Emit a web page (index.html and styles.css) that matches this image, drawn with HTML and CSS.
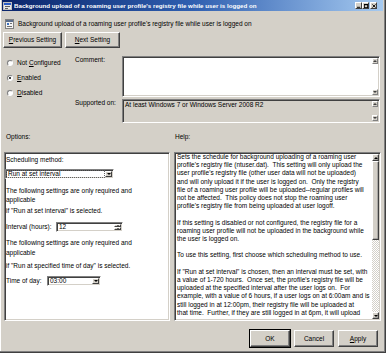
FILE: index.html
```html
<!DOCTYPE html>
<html>
<head>
<meta charset="utf-8">
<title>Background upload of a roaming user profile's registry file while user is logged on</title>
<link rel="stylesheet" href="styles.css">
</head>
<body>
<div class="window">
  <div class="titlebar">
    <svg class="ticon" width="9" height="8" viewBox="0 0 9 8">
      <rect x="0.5" y="0.5" width="8" height="7" fill="#e8e8e8" stroke="#c0c0c0"/>
      <rect x="1" y="1" width="7" height="2" fill="#2a5cc8"/>
      <rect x="2" y="4" width="5" height="1" fill="#606060"/>
      <rect x="2" y="6" width="3" height="1" fill="#606060"/>
    </svg>
    <span class="title">Background upload of a roaming user profile's registry file while user is logged on</span>
    <div class="tbtns">
      <span class="tbtn"><svg width="5" height="5" viewBox="0 0 5 5"><rect x="0" y="3.5" width="4" height="1.2" fill="#000"/></svg></span>
      <span class="tbtn"><svg width="5" height="5" viewBox="0 0 5 5"><rect x="0.5" y="0.5" width="4" height="4" fill="none" stroke="#000"/><rect x="0" y="0" width="5" height="1.5" fill="#000"/></svg></span>
      <span class="tbtn close"><svg width="5" height="5" viewBox="0 0 5 5"><path d="M0.5 0.5 L4.5 4.5 M4.5 0.5 L0.5 4.5" stroke="#000" stroke-width="1.1"/></svg></span>
    </div>
  </div>

  <div class="content">
    <div class="header">
      <svg class="hicon" width="9" height="10" viewBox="0 0 9 10">
        <rect x="0.5" y="0.5" width="8" height="9" fill="#f4f4f4" stroke="#808080"/>
        <rect x="1" y="1" width="7" height="2" fill="#5a6e8c"/>
        <rect x="2" y="4" width="2" height="2" fill="#3a70c0"/>
        <rect x="5" y="4" width="2" height="1" fill="#707070"/>
        <rect x="2" y="7" width="5" height="1" fill="#707070"/>
      </svg>
      <span>Background upload of a roaming user profile's registry file while user is logged on</span>
    </div>

    <div class="nav">
      <button class="btn prev"><u>P</u>revious Setting</button>
      <button class="btn next"><u>N</u>ext Setting</button>
    </div>

    <div class="top">
      <div class="radios">
        <div class="radio"><span class="rc"></span><span>Not <u>C</u>onfigured</span></div>
        <div class="radio"><span class="rc on"></span><span><u>E</u>nabled</span></div>
        <div class="radio"><span class="rc"></span><span><u>D</u>isabled</span></div>
      </div>
      <div class="fields">
        <div class="flabel">Comment:</div>
        <div class="box comment sunken">
          <div class="boxtext"></div>
          <div class="mini-scroll">
            <span class="mbtn"><span class="arr up"></span></span>
            <span class="mtrack"></span>
            <span class="mbtn"><span class="arr down"></span></span>
          </div>
        </div>
        <div class="flabel">Supported on:</div>
        <div class="box supported sunken">
          <div class="boxtext">At least Windows 7 or Windows Server 2008 R2</div>
          <div class="mini-scroll">
            <span class="mbtn"><span class="arr up"></span></span>
            <span class="mtrack"></span>
            <span class="mbtn"><span class="arr down"></span></span>
          </div>
        </div>
      </div>
    </div>

    <div class="labels">
      <span class="lab-options">Options:</span>
      <span class="lab-help">Help:</span>
    </div>

    <div class="panes">
      <div class="options sunken">
        <p class="l8 first">Scheduling method:</p>
        <div class="combo sunken wide">
          <span class="cval sel">Run at set interval</span>
          <span class="cbtn"><span class="arr down"></span></span>
        </div>
        <p class="l9 m7">The following settings are only required and<br>applicable</p>
        <p class="l9 m2">if "Run at set interval" is selected.</p>
        <div class="row m7">
          <span class="lbl w51">Interval (hours):</span>
          <div class="spin sunken">
            <span class="cval">12</span>
            <span class="sbtns"><span class="sb"><span class="arr up"></span></span><span class="sb"><span class="arr down"></span></span></span>
          </div>
        </div>
        <p class="l95 m6">The following settings are only required and<br>applicable</p>
        <p class="l95 m4">if "Run at specified time of day" is selected.</p>
        <div class="row m55">
          <span class="lbl w42">Time of day:</span>
          <div class="combo sunken small">
            <span class="cval">03:00</span>
            <span class="cbtn"><span class="arr down"></span></span>
          </div>
        </div>
      </div>

      <div class="help sunken">
        <div class="helptext">Sets the schedule for background uploading of a roaming user
profile's registry file (ntuser.dat).  This setting will only upload the
user profile's registry file (other user data will not be uploaded)
and will only upload it if the user is logged on.  Only the registry
file of a roaming user profile will be uploaded--regular profiles will
not be affected.  This policy does not stop the roaming user
profile's registry file from being uploaded at user logoff.

If this setting is disabled or not configured, the registry file for a
roaming user profile will not be uploaded in the background while
the user is logged on.

To use this setting, first choose which scheduling method to use.

If "Run at set interval" is chosen, then an interval must be set, with
a value of 1-720 hours.  Once set, the profile's registry file will be
uploaded at the specified interval after the user logs on.  For
example, with a value of 6 hours, if a user logs on at 6:00am and is
still logged in at 12:00pm, their registry file will be uploaded at
that time.  Further, if they are still logged in at 6pm, it will upload</div>
        <div class="vscroll">
          <span class="sbtn"><span class="arr up dark"></span></span>
          <span class="thumb"></span>
          <span class="track"></span>
          <span class="sbtn"><span class="arr down dark"></span></span>
        </div>
      </div>
    </div>

    <div class="footer">
      <button class="btn fbtn default">OK</button>
      <button class="btn fbtn">Cancel</button>
      <button class="btn fbtn"><u>A</u>pply</button>
    </div>
  </div>
</div>
</body>
</html>
```

FILE: styles.css
```css
* { box-sizing: border-box; }
html, body { margin: 0; padding: 0; background: #d4d0c8; }
body {
  font-family: "Liberation Sans", Arial, sans-serif;
  font-size: 6.5px;
  line-height: 8px;
  color: #000;
}
p { margin: 0; }
u { text-decoration: underline; text-underline-offset: 1px; }

.window {
  width: 386px;
  height: 353px;
  display: flex;
  flex-direction: column;
  padding: 0 2px 0 2px;
  border-right: 1px solid #404040;
  border-bottom: 1px solid #404040;
  box-shadow: inset -1px -1px #808080, inset 1px 0 #ffffff;
  overflow: hidden;
}

/* title bar */
.titlebar {
  height: 11px;
  flex: none;
  display: flex;
  align-items: center;
  padding: 0 6px 0 1px;
  background: linear-gradient(to right, #0a246a 0%, #2f5fb0 50%, #a6caf0 100%);
}
.ticon { flex: none; margin-right: 2px; }
.title {
  flex: 1;
  color: #fff;
  font-weight: bold;
  font-size: 6.2px;
  white-space: nowrap;
  overflow: hidden;
}
.tbtns { display: flex; flex: none; }
.tbtn {
  width: 7px;
  height: 7px;
  display: flex;
  align-items: center;
  justify-content: center;
  background: #d4d0c8;
  border: 1px solid;
  border-color: #fff #404040 #404040 #fff;
}
.tbtn svg { width: 4px; height: 4px; }
.tbtn.close { margin-left: 1px; }

.content { display: flex; flex-direction: column; flex: 1; }

/* header */
.header {
  margin-top: 7px;
  height: 11px;
  display: flex;
  align-items: center;
  gap: 4px;
  padding-left: 3px;
  white-space: nowrap;
}
.hicon { flex: none; }

/* generic raised button */
.btn {
  font: inherit;
  color: #000;
  margin: 0;
  padding: 0;
  background: #d4d0c8;
  border: 1px solid;
  border-color: #fff #404040 #404040 #fff;
  box-shadow: inset -1px -1px #808080;
  display: flex;
  align-items: center;
  justify-content: center;
  white-space: nowrap;
}

.nav { margin-top: 3px; display: flex; gap: 3px; padding-left: 1px; }
.nav .btn { height: 16px; }
.prev { width: 59px; }
.next { width: 55px; }

/* sunken */
.sunken {
  border: 1px solid;
  border-color: #808080 #fff #fff #808080;
  box-shadow: inset 1px 1px #404040, inset -1px -1px #d4d0c8;
}

/* top section */
.top { margin-top: 8px; display: flex; }
.radios {
  width: 73px;
  flex: none;
  padding: 3px 0 0 5px;
  display: flex;
  flex-direction: column;
  gap: 7px;
}
.radio { height: 8px; display: flex; align-items: center; gap: 4px; white-space: nowrap; }
.rc {
  width: 6px;
  height: 6px;
  flex: none;
  border-radius: 50%;
  background: #fff;
  border: 1px solid;
  border-color: #808080 #fff #fff #808080;
  box-shadow: 0 0 0 0.3px #c0c0c0;
  display: flex;
  align-items: center;
  justify-content: center;
}
.rc.on::after {
  content: "";
  width: 2px;
  height: 2px;
  border-radius: 50%;
  background: #000;
}

.fields {
  display: grid;
  grid-template-columns: 47px 258px;
  row-gap: 2px;
}
.flabel { white-space: nowrap; }
.box { display: flex; }
.comment { height: 41px; background: #fff; }
.supported { height: 24px; background: #d4d0c8; }
.boxtext { flex: 1; padding: 1px 2px 0 2px; white-space: nowrap; }

.mini-scroll {
  width: 7px;
  flex: none;
  display: flex;
  flex-direction: column;
  padding: 1px 1px 1px 0;
}
.mbtn {
  height: 6px;
  flex: none;
  background: #d4d0c8;
  border: 1px solid;
  border-color: #fff #808080 #808080 #fff;
  display: flex;
  align-items: center;
  justify-content: center;
}
.mtrack { flex: 1; }
.supported .mtrack { background: #d4d0c8; }

/* arrows */
.arr { width: 0; height: 0; display: block; }
.arr.up { border-left: 2px solid transparent; border-right: 2px solid transparent; border-bottom: 2px solid #404040; }
.arr.down { border-left: 2px solid transparent; border-right: 2px solid transparent; border-top: 2px solid #404040; }
.arr.dark.up { border-bottom-color: #000; }
.arr.dark.down { border-top-color: #000; }

/* labels row */
.labels { margin-top: 10px; height: 8px; display: flex; }
.lab-options { width: 173px; padding-left: 4px; }

/* panes */
.panes { margin-top: 11px; height: 169px; display: flex; gap: 4px; padding-left: 2px; }
.options {
  width: 166px;
  background: #fff;
  padding: 3px 0 0 0;
  display: flex;
  flex-direction: column;
  align-items: flex-start;
  overflow: hidden;
}
.options p { margin-left: 1px; white-space: nowrap; }
.l8 { line-height: 8px; }
.l9 { line-height: 9px; }
.l95 { line-height: 9.5px; }
.m2 { margin-top: 2px; }
.m4 { margin-top: 4px; }
.m6 { margin-top: 6px; }
.m7 { margin-top: 7px; }
.m55 { margin-top: 5.5px; }

.combo, .spin {
  height: 10px;
  display: flex;
  align-items: stretch;
  background: #fff;
  flex: none;
}
.combo.wide { margin-top: 5px; width: 109px; }
.combo.small { width: 54px; }
.spin { width: 67px; }
.cval { flex: 1; padding: 0 2px; display: flex; align-items: center; white-space: nowrap; }
.cval.sel { margin: 1px; padding: 0 1px; outline: 0.5px dotted #606060; outline-offset: -0.5px; }
.cbtn {
  width: 7px;
  margin: 1px 1px 1px 0;
  background: #d4d0c8;
  border: 1px solid;
  border-color: #fff #404040 #404040 #fff;
  display: flex;
  align-items: center;
  justify-content: center;
}
.cbtn .arr.down { border-top-color: #000; }
.sbtns { width: 7px; margin: 1px 1px 1px 0; display: flex; flex-direction: column; }
.sb {
  flex: 1;
  background: #d4d0c8;
  border: 0.5px solid;
  border-color: #fff #404040 #404040 #fff;
  display: flex;
  align-items: center;
  justify-content: center;
}
.sb .arr.up { border-left-width: 1.5px; border-right-width: 1.5px; border-bottom: 1.5px solid #000; }
.sb .arr.down { border-left-width: 1.5px; border-right-width: 1.5px; border-top: 1.5px solid #000; }

.row { display: flex; align-items: center; height: 10px; }
.lbl { white-space: nowrap; padding-left: 1px; flex: none; }
.w51 { width: 51px; }
.w42 { width: 42px; }

.help {
  width: 207px;
  background: #fff;
  display: flex;
  overflow: hidden;
}
.helptext {
  flex: 1;
  margin-top: 0;
  padding-left: 2px;
  white-space: pre;
  line-height: 8.2px;
  overflow: hidden;
}
.vscroll {
  width: 7px;
  flex: none;
  display: flex;
  flex-direction: column;
  margin: 1px 1px 1px 0;
}
.sbtn, .thumb {
  background: #d4d0c8;
  border: 1px solid;
  border-color: #fff #404040 #404040 #fff;
  box-shadow: inset -0.5px -0.5px #808080;
}
.sbtn { height: 7px; flex: none; display: flex; align-items: center; justify-content: center; }
.thumb { height: 79px; flex: none; }
.track {
  flex: 1;
  background: repeating-conic-gradient(#ffffff 0 25%, #d4d0c8 0 50%) 0 0 / 2px 2px;
}

/* footer */
.footer {
  margin-top: 9px;
  display: flex;
  justify-content: flex-end;
  gap: 4px;
  padding-right: 5px;
}
.fbtn { width: 40px; height: 17px; }
.fbtn.default { outline: 1px solid #000; outline-offset: 0; }
```
